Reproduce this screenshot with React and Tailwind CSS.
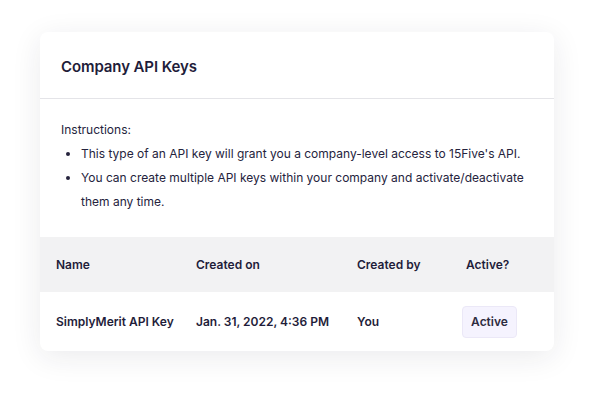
export default function App() {
  return (
    <div className="w-[595px] h-[400px] bg-white pt-[32px] pl-[40px]" style={{ fontFamily: 'Inter, "Noto Sans", sans-serif' }}>
      <div className="w-[514px] h-[319px] bg-white rounded-[8px] shadow-[0_6px_30px_rgba(30,30,60,0.09)] overflow-hidden text-[#1f1d3a]">
        <div className="h-[67px] border-b border-[#e4e4e8] px-[21px] pt-[25px]">
          <h1 className="text-[15px] leading-[20px] font-semibold tracking-[-0.1px]">Company API Keys</h1>
        </div>
        <div className="h-[138px] px-[21px] pt-[19px] text-[12px] leading-[24px] text-[#25233d]">
          <div>Instructions:</div>
          <ul className="list-disc pl-[20px]">
            <li>This type of an API key will grant you a company-level access to 15Five's API.</li>
            <li>You can create multiple API keys within your company and activate/deactivate them any time.</li>
          </ul>
        </div>
        <div className="grid grid-cols-[140px_161px_109px_1fr] pl-[16px] h-[55px] items-center bg-[#f2f2f3] text-[12px] font-semibold">
          <div>Name</div>
          <div>Created on</div>
          <div>Created by</div>
          <div>Active?</div>
        </div>
        <div className="grid grid-cols-[140px_161px_109px_1fr] pl-[16px] h-[59px] items-center text-[12px] font-semibold">
          <div>SimplyMerit API Key</div>
          <div>Jan. 31, 2022, 4:36 PM</div>
          <div>You</div>
          <div>
            <span className="inline-flex items-center justify-center w-[55px] h-[32px] -ml-[4px] rounded-[4px] bg-[#f5f3fe] border border-[#ebe8f7] text-[#2d2b40]">Active</span>
          </div>
        </div>
      </div>
    </div>
  );
}
